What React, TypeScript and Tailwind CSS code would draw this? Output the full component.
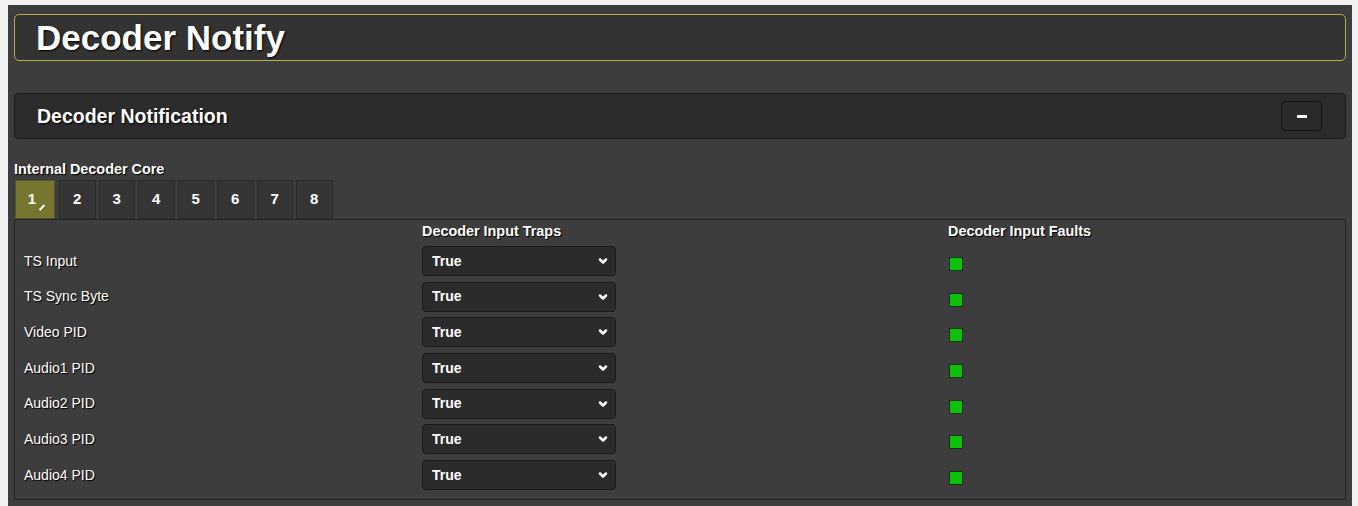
import { ChevronDown } from "lucide-react";

const traps = [
  "TS Input",
  "TS Sync Byte",
  "Video PID",
  "Audio1 PID",
  "Audio2 PID",
  "Audio3 PID",
  "Audio4 PID",
];

const cores = ["1", "2", "3", "4", "5", "6", "7", "8"];

function TrapSelect() {
  return (
    <div className="relative h-[30px] w-[194px]">
      <select
        defaultValue="True"
        className="h-full w-full appearance-none rounded-[4px] border border-[#1b1b1b] bg-[#2b2b2b] pl-[9px] text-[14px] font-bold text-white outline-none"
      >
        <option>True</option>
        <option>False</option>
      </select>
      <ChevronDown
        className="pointer-events-none absolute right-[7px] top-1/2 h-[12px] w-[12px] -translate-y-1/2 text-white"
        strokeWidth={5}
      />
    </div>
  );
}

function CoreTabs({ active }: { active: string }) {
  return (
    <div className="flex gap-[3px] pl-px">
      {cores.map((c) =>
        c === active ? (
          <div
            key={c}
            className="relative mr-px flex h-[39px] w-[40px] items-center justify-center border border-[#55552a] bg-[#76762e] text-[15px] font-bold text-white"
          >
            <span className="-ml-[6px]">{c}</span>
            <span className="absolute left-[25px] top-[23px] h-[7px] w-[2px] rotate-45 bg-white" />
          </div>
        ) : (
          <div
            key={c}
            className="flex h-[39px] w-[36.5px] items-center justify-center border border-[#2a2a2a] bg-[#353535] text-[15px] font-bold text-white"
          >
            {c}
          </div>
        ),
      )}
    </div>
  );
}

export default function App() {
  return (
    <div
      className="h-[506px] w-full overflow-hidden bg-[#f2f2f2] pl-2 pr-1.5 pt-[5px]"
      style={{ fontFamily: '"Liberation Sans", Arial, sans-serif' }}
    >
      <div className="h-full bg-[#3d3d3d] px-1.5 pt-[9px]">
        <div className="flex h-[47px] items-center rounded-[5px] border-[1.5px] border-[#b0ae4a] bg-[#333333] pl-[21px]">
          <h1 className="text-[35px] font-bold leading-none text-white [text-shadow:1px_1px_2px_#000]">
            Decoder Notify
          </h1>
        </div>

        <div className="mt-[32px] flex h-[46px] items-center justify-between rounded-[4px] border border-[#1c1c1c] bg-[#2c2c2c] pl-[22px] pr-[23px]">
          <h2 className="pt-[2px] text-[19.5px] font-bold text-white [text-shadow:1px_1px_2px_#000]">
            Decoder Notification
          </h2>
          <button className="flex h-[30px] w-[41px] items-center justify-center rounded-[4px] border border-[#141414] bg-[#2a2a2a]">
            <span className="h-[3px] w-[10px] bg-white" />
          </button>
        </div>

        <p className="mt-[22px] text-[14.4px] font-bold leading-[16px] text-white [text-shadow:1px_1px_1px_#000]">
          Internal Decoder Core
        </p>
        <div className="mt-[3px]">
          <CoreTabs active="1" />
        </div>

        <div className="h-[281px] border border-[#222222] pl-[9px]">
          <div className="grid grid-cols-[398px_526px_1fr] pt-[2px]">
            <div />
            <div className="text-[14.4px] font-bold leading-[18px] text-white [text-shadow:1px_1px_1px_#000]">
              Decoder Input Traps
            </div>
            <div className="text-[14.4px] font-bold leading-[18px] text-white [text-shadow:1px_1px_1px_#000]">
              Decoder Input Faults
            </div>
          </div>
          <div className="mt-[6px] flex flex-col gap-[5.7px]">
            {traps.map((t) => (
              <div key={t} className="grid h-[30px] grid-cols-[398px_526px_1fr] items-center">
                <span className="text-[14px] text-white [text-shadow:1px_1px_1px_#000]">{t}</span>
                <TrapSelect />
                <span className="mt-[6px] ml-px h-[14px] w-[14px] border border-[#123312] bg-[#0cc00c]" />
              </div>
            ))}
          </div>
        </div>
      </div>
    </div>
  );
}
